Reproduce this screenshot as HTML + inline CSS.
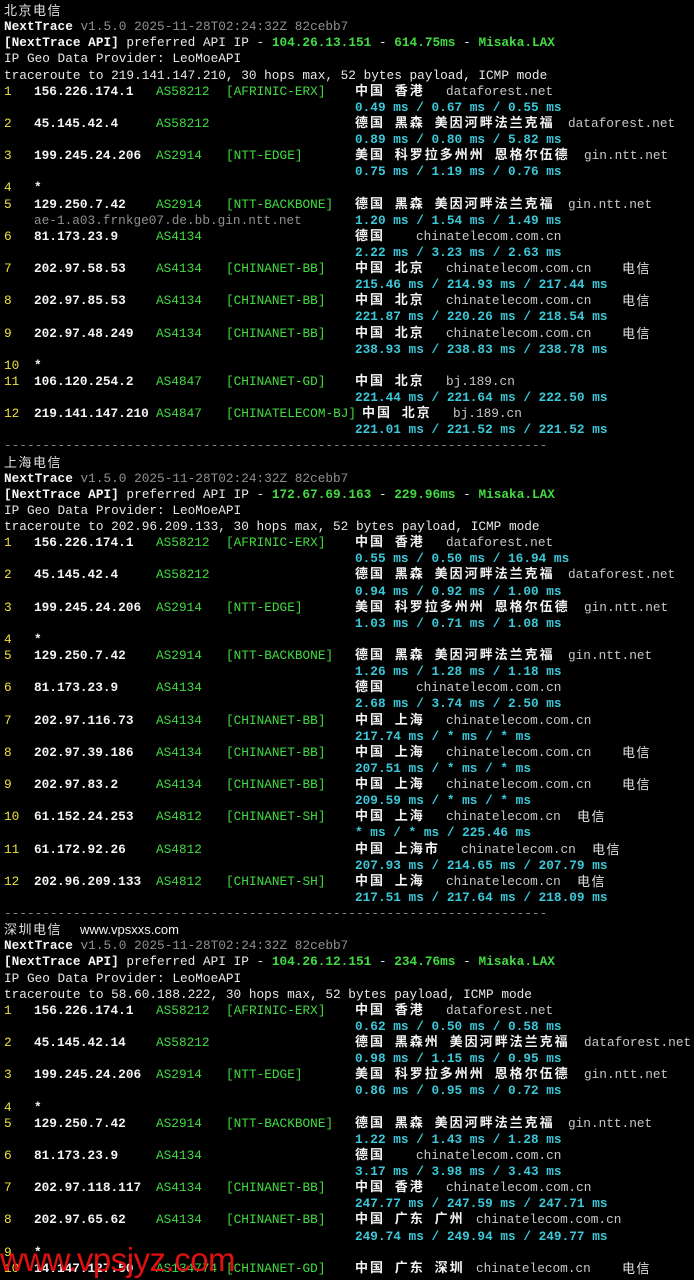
<!DOCTYPE html>
<html><head><meta charset="utf-8"><style>
html,body{margin:0;padding:0;background:#000;width:694px;height:1280px;overflow:hidden}
#c{position:absolute;left:0;top:3px;width:694px;font-family:"Liberation Mono","Noto Sans CJK SC",monospace;font-size:12.75px;color:#e8e8e8}
.l{position:relative;height:16.14px;line-height:16px;white-space:pre}
.l span{position:absolute;top:0}
.x{left:4px}
.h{left:4px;color:#ece040}
.ip{left:34px;color:#f4f4f4;font-weight:bold}
.as{left:156px;color:#42dc42}
.tg{left:226px;color:#42dc42}
.g{left:355px;color:#f4f4f4;font-weight:bold;font-family:"Liberation Mono","Noto Sans CJK SC",monospace;letter-spacing:2px;font-size:13px}
.t{left:355px;color:#3cc8d8;font-weight:bold}
.n{color:#c8c8c8}
.d{color:#909090}
.b{color:#f8f8f8;font-weight:bold}
.gr{color:#42dc42;font-weight:bold}
.cj{font-family:"Liberation Sans","Noto Sans CJK SC",sans-serif;font-size:13px;color:#e0e0e0;letter-spacing:1.5px}
.dash{color:#888}
.wm{position:absolute;left:0;top:1241px;font-family:"Liberation Sans",sans-serif;font-size:33px;color:#e01010;letter-spacing:-0.5px}
</style></head><body>
<div id="c">
<div class="l"><span class="x cj">北京电信</span></div>
<div class="l"><span class="x"><b class="b">NextTrace</b> <span class="d" style="position:static">v1.5.0 2025-11-28T02:24:32Z 82cebb7</span></span></div>
<div class="l"><span class="x"><b class="b">[NextTrace API]</b> preferred API IP - <b class="gr">104.26.13.151</b> - <b class="gr">614.75ms</b> - <b class="gr">Misaka.LAX</b></span></div>
<div class="l"><span class="x">IP Geo Data Provider: LeoMoeAPI</span></div>
<div class="l"><span class="x">traceroute to 219.141.147.210, 30 hops max, 52 bytes payload, ICMP mode</span></div>
<div class="l"><span class="h">1</span><span class="ip">156.226.174.1</span><span class="as">AS58212</span><span class="tg">[AFRINIC-ERX]</span><span class="g">中国 香港</span><span class="n" style="left:446px">dataforest.net</span></div>
<div class="l"><span class="t">0.49 ms / 0.67 ms / 0.55 ms</span></div>
<div class="l"><span class="h">2</span><span class="ip">45.145.42.4</span><span class="as">AS58212</span><span class="g">德国 黑森 美因河畔法兰克福</span><span class="n" style="left:568px">dataforest.net</span></div>
<div class="l"><span class="t">0.89 ms / 0.80 ms / 5.82 ms</span></div>
<div class="l"><span class="h">3</span><span class="ip">199.245.24.206</span><span class="as">AS2914</span><span class="tg">[NTT-EDGE]</span><span class="g">美国 科罗拉多州州 恩格尔伍德</span><span class="n" style="left:584px">gin.ntt.net</span></div>
<div class="l"><span class="t">0.75 ms / 1.19 ms / 0.76 ms</span></div>
<div class="l"><span class="h">4</span><span class="ip">*</span></div>
<div class="l"><span class="h">5</span><span class="ip">129.250.7.42</span><span class="as">AS2914</span><span class="tg">[NTT-BACKBONE]</span><span class="g">德国 黑森 美因河畔法兰克福</span><span class="n" style="left:568px">gin.ntt.net</span></div>
<div class="l"><span class="d" style="left:34px">ae-1.a03.frnkge07.de.bb.gin.ntt.net</span><span class="t">1.20 ms / 1.54 ms / 1.49 ms</span></div>
<div class="l"><span class="h">6</span><span class="ip">81.173.23.9</span><span class="as">AS4134</span><span class="g">德国</span><span class="n" style="left:416px">chinatelecom.com.cn</span></div>
<div class="l"><span class="t">2.22 ms / 3.23 ms / 2.63 ms</span></div>
<div class="l"><span class="h">7</span><span class="ip">202.97.58.53</span><span class="as">AS4134</span><span class="tg">[CHINANET-BB]</span><span class="g">中国 北京</span><span class="n" style="left:446px">chinatelecom.com.cn</span><span class="cj" style="left:622px">电信</span></div>
<div class="l"><span class="t">215.46 ms / 214.93 ms / 217.44 ms</span></div>
<div class="l"><span class="h">8</span><span class="ip">202.97.85.53</span><span class="as">AS4134</span><span class="tg">[CHINANET-BB]</span><span class="g">中国 北京</span><span class="n" style="left:446px">chinatelecom.com.cn</span><span class="cj" style="left:622px">电信</span></div>
<div class="l"><span class="t">221.87 ms / 220.26 ms / 218.54 ms</span></div>
<div class="l"><span class="h">9</span><span class="ip">202.97.48.249</span><span class="as">AS4134</span><span class="tg">[CHINANET-BB]</span><span class="g">中国 北京</span><span class="n" style="left:446px">chinatelecom.com.cn</span><span class="cj" style="left:622px">电信</span></div>
<div class="l"><span class="t">238.93 ms / 238.83 ms / 238.78 ms</span></div>
<div class="l"><span class="h">10</span><span class="ip">*</span></div>
<div class="l"><span class="h">11</span><span class="ip">106.120.254.2</span><span class="as">AS4847</span><span class="tg">[CHINANET-GD]</span><span class="g">中国 北京</span><span class="n" style="left:446px">bj.189.cn</span></div>
<div class="l"><span class="t">221.44 ms / 221.64 ms / 222.50 ms</span></div>
<div class="l"><span class="h">12</span><span class="ip">219.141.147.210</span><span class="as">AS4847</span><span class="tg">[CHINATELECOM-BJ]</span><span class="g" style="left:362px">中国 北京</span><span class="n" style="left:453px">bj.189.cn</span></div>
<div class="l"><span class="t">221.01 ms / 221.52 ms / 221.52 ms</span></div>
<div class="l"><span class="x dash">-----------------------------------------------------------------------</span></div>
<div class="l"><span class="x cj">上海电信</span></div>
<div class="l"><span class="x"><b class="b">NextTrace</b> <span class="d" style="position:static">v1.5.0 2025-11-28T02:24:32Z 82cebb7</span></span></div>
<div class="l"><span class="x"><b class="b">[NextTrace API]</b> preferred API IP - <b class="gr">172.67.69.163</b> - <b class="gr">229.96ms</b> - <b class="gr">Misaka.LAX</b></span></div>
<div class="l"><span class="x">IP Geo Data Provider: LeoMoeAPI</span></div>
<div class="l"><span class="x">traceroute to 202.96.209.133, 30 hops max, 52 bytes payload, ICMP mode</span></div>
<div class="l"><span class="h">1</span><span class="ip">156.226.174.1</span><span class="as">AS58212</span><span class="tg">[AFRINIC-ERX]</span><span class="g">中国 香港</span><span class="n" style="left:446px">dataforest.net</span></div>
<div class="l"><span class="t">0.55 ms / 0.50 ms / 16.94 ms</span></div>
<div class="l"><span class="h">2</span><span class="ip">45.145.42.4</span><span class="as">AS58212</span><span class="g">德国 黑森 美因河畔法兰克福</span><span class="n" style="left:568px">dataforest.net</span></div>
<div class="l"><span class="t">0.94 ms / 0.92 ms / 1.00 ms</span></div>
<div class="l"><span class="h">3</span><span class="ip">199.245.24.206</span><span class="as">AS2914</span><span class="tg">[NTT-EDGE]</span><span class="g">美国 科罗拉多州州 恩格尔伍德</span><span class="n" style="left:584px">gin.ntt.net</span></div>
<div class="l"><span class="t">1.03 ms / 0.71 ms / 1.08 ms</span></div>
<div class="l"><span class="h">4</span><span class="ip">*</span></div>
<div class="l"><span class="h">5</span><span class="ip">129.250.7.42</span><span class="as">AS2914</span><span class="tg">[NTT-BACKBONE]</span><span class="g">德国 黑森 美因河畔法兰克福</span><span class="n" style="left:568px">gin.ntt.net</span></div>
<div class="l"><span class="t">1.26 ms / 1.28 ms / 1.18 ms</span></div>
<div class="l"><span class="h">6</span><span class="ip">81.173.23.9</span><span class="as">AS4134</span><span class="g">德国</span><span class="n" style="left:416px">chinatelecom.com.cn</span></div>
<div class="l"><span class="t">2.68 ms / 3.74 ms / 2.50 ms</span></div>
<div class="l"><span class="h">7</span><span class="ip">202.97.116.73</span><span class="as">AS4134</span><span class="tg">[CHINANET-BB]</span><span class="g">中国 上海</span><span class="n" style="left:446px">chinatelecom.com.cn</span></div>
<div class="l"><span class="t">217.74 ms / * ms / * ms</span></div>
<div class="l"><span class="h">8</span><span class="ip">202.97.39.186</span><span class="as">AS4134</span><span class="tg">[CHINANET-BB]</span><span class="g">中国 上海</span><span class="n" style="left:446px">chinatelecom.com.cn</span><span class="cj" style="left:622px">电信</span></div>
<div class="l"><span class="t">207.51 ms / * ms / * ms</span></div>
<div class="l"><span class="h">9</span><span class="ip">202.97.83.2</span><span class="as">AS4134</span><span class="tg">[CHINANET-BB]</span><span class="g">中国 上海</span><span class="n" style="left:446px">chinatelecom.com.cn</span><span class="cj" style="left:622px">电信</span></div>
<div class="l"><span class="t">209.59 ms / * ms / * ms</span></div>
<div class="l"><span class="h">10</span><span class="ip">61.152.24.253</span><span class="as">AS4812</span><span class="tg">[CHINANET-SH]</span><span class="g">中国 上海</span><span class="n" style="left:446px">chinatelecom.cn</span><span class="cj" style="left:577px">电信</span></div>
<div class="l"><span class="t">* ms / * ms / 225.46 ms</span></div>
<div class="l"><span class="h">11</span><span class="ip">61.172.92.26</span><span class="as">AS4812</span><span class="g">中国 上海市</span><span class="n" style="left:461px">chinatelecom.cn</span><span class="cj" style="left:592px">电信</span></div>
<div class="l"><span class="t">207.93 ms / 214.65 ms / 207.79 ms</span></div>
<div class="l"><span class="h">12</span><span class="ip">202.96.209.133</span><span class="as">AS4812</span><span class="tg">[CHINANET-SH]</span><span class="g">中国 上海</span><span class="n" style="left:446px">chinatelecom.cn</span><span class="cj" style="left:577px">电信</span></div>
<div class="l"><span class="t">217.51 ms / 217.64 ms / 218.09 ms</span></div>
<div class="l"><span class="x dash">-----------------------------------------------------------------------</span></div>
<div class="l"><span class="x cj">深圳电信</span><span style="left:80px;font-family:'Liberation Sans',sans-serif;font-size:13px;color:#f4f4f4">www.vpsxxs.com</span></div>
<div class="l"><span class="x"><b class="b">NextTrace</b> <span class="d" style="position:static">v1.5.0 2025-11-28T02:24:32Z 82cebb7</span></span></div>
<div class="l"><span class="x"><b class="b">[NextTrace API]</b> preferred API IP - <b class="gr">104.26.12.151</b> - <b class="gr">234.76ms</b> - <b class="gr">Misaka.LAX</b></span></div>
<div class="l"><span class="x">IP Geo Data Provider: LeoMoeAPI</span></div>
<div class="l"><span class="x">traceroute to 58.60.188.222, 30 hops max, 52 bytes payload, ICMP mode</span></div>
<div class="l"><span class="h">1</span><span class="ip">156.226.174.1</span><span class="as">AS58212</span><span class="tg">[AFRINIC-ERX]</span><span class="g">中国 香港</span><span class="n" style="left:446px">dataforest.net</span></div>
<div class="l"><span class="t">0.62 ms / 0.50 ms / 0.58 ms</span></div>
<div class="l"><span class="h">2</span><span class="ip">45.145.42.14</span><span class="as">AS58212</span><span class="g">德国 黑森州 美因河畔法兰克福</span><span class="n" style="left:584px">dataforest.net</span></div>
<div class="l"><span class="t">0.98 ms / 1.15 ms / 0.95 ms</span></div>
<div class="l"><span class="h">3</span><span class="ip">199.245.24.206</span><span class="as">AS2914</span><span class="tg">[NTT-EDGE]</span><span class="g">美国 科罗拉多州州 恩格尔伍德</span><span class="n" style="left:584px">gin.ntt.net</span></div>
<div class="l"><span class="t">0.86 ms / 0.95 ms / 0.72 ms</span></div>
<div class="l"><span class="h">4</span><span class="ip">*</span></div>
<div class="l"><span class="h">5</span><span class="ip">129.250.7.42</span><span class="as">AS2914</span><span class="tg">[NTT-BACKBONE]</span><span class="g">德国 黑森 美因河畔法兰克福</span><span class="n" style="left:568px">gin.ntt.net</span></div>
<div class="l"><span class="t">1.22 ms / 1.43 ms / 1.28 ms</span></div>
<div class="l"><span class="h">6</span><span class="ip">81.173.23.9</span><span class="as">AS4134</span><span class="g">德国</span><span class="n" style="left:416px">chinatelecom.com.cn</span></div>
<div class="l"><span class="t">3.17 ms / 3.98 ms / 3.43 ms</span></div>
<div class="l"><span class="h">7</span><span class="ip">202.97.118.117</span><span class="as">AS4134</span><span class="tg">[CHINANET-BB]</span><span class="g">中国 香港</span><span class="n" style="left:446px">chinatelecom.com.cn</span></div>
<div class="l"><span class="t">247.77 ms / 247.59 ms / 247.71 ms</span></div>
<div class="l"><span class="h">8</span><span class="ip">202.97.65.62</span><span class="as">AS4134</span><span class="tg">[CHINANET-BB]</span><span class="g">中国 广东 广州</span><span class="n" style="left:476px">chinatelecom.com.cn</span></div>
<div class="l"><span class="t">249.74 ms / 249.94 ms / 249.77 ms</span></div>
<div class="l"><span class="h">9</span><span class="ip">*</span></div>
<div class="l"><span class="h">10</span><span class="ip">14.147.127.50</span><span class="as">AS134774</span><span class="tg">[CHINANET-GD]</span><span class="g">中国 广东 深圳</span><span class="n" style="left:476px">chinatelecom.cn</span><span class="cj" style="left:622px">电信</span></div>
</div>
<div class="wm">www.vpsjyz.com</div>
</body></html>
